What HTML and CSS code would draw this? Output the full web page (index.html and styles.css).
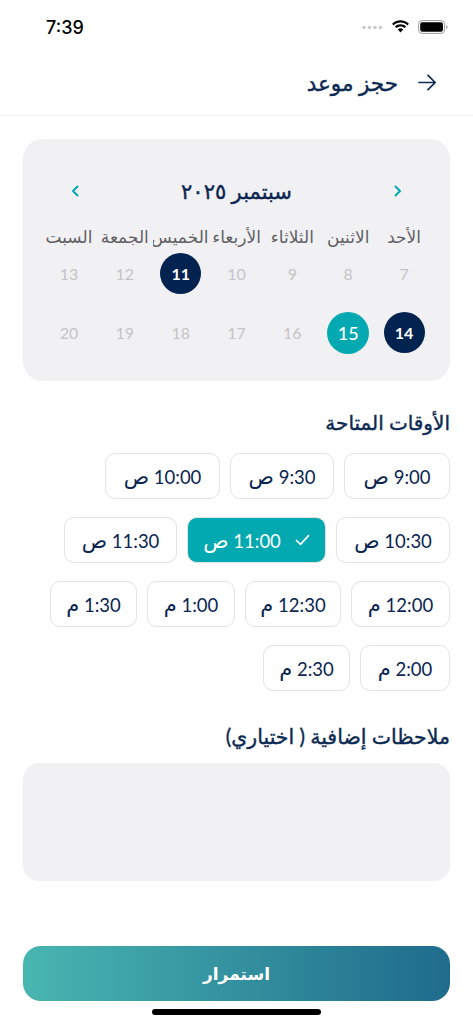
FILE: index.html
```html
<!DOCTYPE html>
<html lang="ar" dir="rtl">
  <head>
    <meta charset="UTF-8">
    <meta name="viewport" content="width=device-width, initial-scale=1.0">
    <title>حجز موعد</title>
    <link rel="stylesheet" href="styles.css">
  </head>
  <body>
    <div class="screen">
      <div class="status-bar" dir="ltr">
        <span class="clock">7:39</span>
        <div class="status-icons">
          <svg width="21" height="5" viewBox="0 0 21 5"><g fill="#c9c9cc"><circle cx="2" cy="2.5" r="1.7"/><circle cx="7.5" cy="2.5" r="1.7"/><circle cx="13" cy="2.5" r="1.7"/><circle cx="18.5" cy="2.5" r="1.7"/></g></svg>
          <svg width="19" height="14" viewBox="0 0 19 14"><path d="M9.5 2.6c2.7 0 5.1 1 6.9 2.8l1.5-1.6C15.7 1.600 12.700.3 9.500.3S3.300 1.600 1.100 3.800l1.500 1.600C4.400 3.600 6.800 2.600 9.500 2.600z"/><path d="M9.500 6.500c1.600 0 3 .6 4.100 1.600l1.500-1.600C13.600 5 11.700 4.200 9.500 4.200S5.400 5 3.900 6.500l1.500 1.600c1.100-1 2.500-1.600 4.100-1.600z"/><path d="M9.500 8.300c-1.100 0-2 .4-2.700 1.100l2.700 3.100 2.700-3.100c-.7-.7-1.600-1.100-2.700-1.100z"/></svg>
          <svg width="30" height="14" viewBox="0 0 30 14"><rect x=".6" y=".6" width="26" height="12.800" rx="3.600" fill="none" stroke="#9a9a9a" stroke-width="1"/><rect x="2.200" y="2.200" width="22.800" height="9.600" rx="2.200"/><path d="M28.200 5v4c.8-.3 1.300-1.100 1.300-2s-.5-1.700-1.300-2z" fill="#9a9a9a"/></svg>
        </div>
      </div>

      <header class="top-bar">
        <svg class="back" width="18" height="17" viewBox="0 0 18 17" fill="none" stroke="#0c2a52" stroke-width="1.700" stroke-linecap="round" stroke-linejoin="round"><path d="M1 8.500h16M10 1.300l7.200 7.200-7.200 7.200"/></svg>
        <h1>حجز موعد</h1>
      </header>

      <main class="content">
        <section class="calendar">
          <div class="cal-head">
            <svg width="8" height="12" viewBox="0 0 8 12" fill="none" stroke="#03a9b0" stroke-width="2" stroke-linecap="round" stroke-linejoin="round"><path d="M1.500 1.500 6 6 1.500 10.500"/></svg>
            <h2>سبتمبر ٢٠٢٥</h2>
            <svg width="8" height="12" viewBox="0 0 8 12" fill="none" stroke="#03a9b0" stroke-width="2" stroke-linecap="round" stroke-linejoin="round"><path d="M6.500 1.500 2 6l4.500 4.500"/></svg>
          </div>
          <div class="week-names">
            <span>الأحد</span><span>الاثنين</span><span>الثلاثاء</span><span>الأربعاء</span><span>الخميس</span><span>الجمعة</span><span>السبت</span>
          </div>
          <div class="days">
            <span>7</span><span>8</span><span>9</span><span>10</span><span class="booked">11</span><span>12</span><span>13</span>
            <span class="booked">14</span><span class="picked">15</span><span>16</span><span>17</span><span>18</span><span>19</span><span>20</span>
          </div>
        </section>

        <h3 class="label">الأوقات المتاحة</h3>
        <div class="slots">
          <div class="slot s1"><span>9:00 <i>ص</i></span></div>
          <div class="slot s2"><span>9:30 <i>ص</i></span></div>
          <div class="slot s3"><span>10:00 <i>ص</i></span></div>
          <div class="slot s4"><span>10:30 <i>ص</i></span></div>
          <div class="slot s5 active">
            <svg width="15" height="12" viewBox="0 0 15 12" fill="none" stroke="#fff" stroke-width="1.700" stroke-linecap="round" stroke-linejoin="round"><path d="M1.500 6.500 5.500 10.300 13.500 1.700"/></svg>
            <span>11:00 <i>ص</i></span>
          </div>
          <div class="slot s6"><span>11:30 <i>ص</i></span></div>
          <div class="slot s7"><span>12:00 <i>م</i></span></div>
          <div class="slot s8"><span>12:30 <i>م</i></span></div>
          <div class="slot s9"><span>1:00 <i>م</i></span></div>
          <div class="slot s10"><span>1:30 <i>م</i></span></div>
          <div class="slot s11"><span>2:00 <i>م</i></span></div>
          <div class="slot s12"><span>2:30 <i>م</i></span></div>
        </div>

        <h3 class="label notes-label">ملاحظات إضافية ( اختياري)</h3>
        <div class="notes"></div>

        <button class="continue">استمرار</button>
      </main>

      <div class="home-bar"></div>
    </div>
  </body>
</html>
```

FILE: styles.css
```css
* {
  box-sizing: border-box;
}
html,
body {
  margin: 0;
  background-color: #ffffff;
  font-family: Lato, "DejaVu Sans", sans-serif;
  color: #0c2a52;
}
h1,
h2,
h3 {
  margin: 0;
  font-weight: 400;
  -webkit-text-stroke: 0.4px currentColor;
}
.screen {
  position: relative;
  width: 473px;
  height: 1024px;
  overflow: hidden;
}
.status-bar {
  height: 54px;
  padding: 0 25px 0 46px;
  display: flex;
  align-items: center;
  justify-content: space-between;
}
.clock {
  font-family: Inter, sans-serif;
  font-size: 18px;
  font-weight: 500;
  color: #000;
}
.status-icons {
  display: flex;
  align-items: center;
  gap: 8px;
}
.top-bar {
  height: 62px;
  padding: 0 37px 4px;
  display: flex;
  align-items: center;
  gap: 20px;
  border-bottom: 1px solid #eeeef3;
}
.top-bar h1 {
  font-size: 21.5px;
  color: #0c2a52;
}
.content {
  padding: 23px 23px 0;
}
.calendar {
  height: 242px;
  padding: 38px 18px 0;
  background-color: #f1f1f4;
  border-radius: 20px;
}
.cal-head {
  height: 28px;
  padding: 0 30px;
  display: flex;
  align-items: center;
  justify-content: space-between;
}
.cal-head h2 {
  font-size: 21px;
  color: #0a2550;
}
.week-names {
  margin-top: 20px;
  display: grid;
  grid-template-columns: repeat(7, 1fr);
  height: 24px;
  line-height: 24px;
}
.week-names span {
  font-size: 17px;
  color: #5f5f63;
  text-align: center;
  white-space: nowrap;
  overflow: hidden;
}
.days {
  margin-top: 4px;
  display: grid;
  grid-template-columns: repeat(7, 1fr);
  grid-auto-rows: 41px;
  row-gap: 18px;
  justify-items: center;
  align-items: center;
}
.days span {
  width: 41px;
  height: 41px;
  line-height: 41px;
  border-radius: 50%;
  text-align: center;
  font-size: 16px;
  color: #c4c4c6;
}
.days .booked {
  background-color: #02224f;
  color: #fff;
  font-weight: 700;
}
.days .picked {
  width: 42px;
  height: 42px;
  line-height: 42px;
  background-color: #03a9b0;
  color: #fff;
  font-size: 18px;
  font-weight: 500;
}
.label {
  margin-top: 27px;
  height: 28px;
  line-height: 28px;
  font-size: 20px;
  color: #0c2a52;
}
.slots {
  margin-top: 17px;
  display: flex;
  flex-wrap: wrap;
  gap: 18px 10px;
}
.slot {
  height: 46px;
  display: flex;
  align-items: center;
  justify-content: center;
  gap: 14px;
  border: 1.5px solid #e3e3e5;
  border-radius: 10px;
  font-size: 18.5px;
  color: #0a2550;
  white-space: nowrap;
}
.slot i {
  font-style: normal;
  font-size: 21px;
}
.s1 { width: 106px; }
.s2 { width: 104px; }
.s3 { width: 115px; }
.s4 { width: 114px; }
.s5 { width: 139px; }
.s6 { width: 113px; }
.s7 { width: 99px; }
.s8 { width: 96px; }
.s9 { width: 88px; }
.s10 { width: 87px; }
.s11 { width: 90px; }
.s12 { width: 87px; }
.slot.active {
  background-color: #03a9b0;
  color: #fff;
}
.notes-label {
  margin-top: 31px;
  font-size: 20.5px;
}
.notes {
  margin-top: 13px;
  height: 118px;
  background-color: #f1f1f4;
  border-radius: 16px;
}
.continue {
  display: block;
  width: 100%;
  height: 55px;
  margin-top: 65px;
  border: 0;
  border-radius: 18px;
  background: linear-gradient(to right, #48b6b1, #1f6b8c);
  color: #fff;
  font-family: inherit;
  font-size: 17px;
  font-weight: 700;
}
.home-bar {
  position: absolute;
  left: 152px;
  bottom: 9px;
  width: 169px;
  height: 6px;
  background-color: #000;
  border-radius: 3px;
}
```
